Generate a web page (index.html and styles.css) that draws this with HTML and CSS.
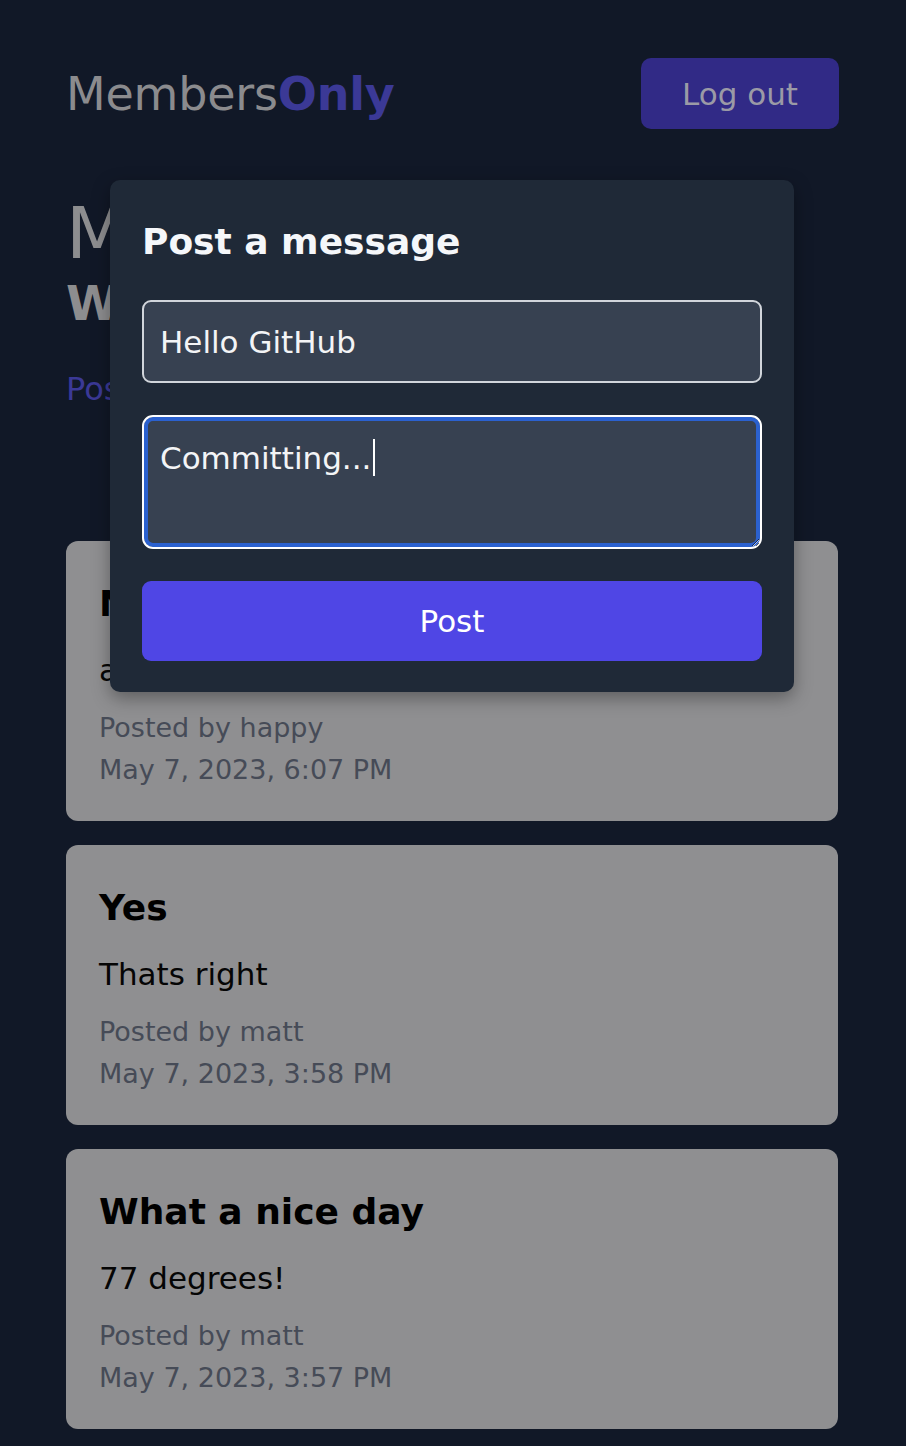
FILE: index.html
```html
<!DOCTYPE html>
<html lang="en">
<head>
<meta charset="utf-8">
<title>MembersOnly</title>
<link rel="stylesheet" href="styles.css">
</head>
<body>
<div class="page">
  <header class="header">
    <div class="logo">Members<span class="logo-accent">Only</span></div>
    <button class="logout">Log out</button>
  </header>

  <section class="intro">
    <h1 class="intro-title">Messages</h1>
    <h2 class="intro-sub">Welcome back, matt</h2>
    <a class="intro-link" href="#">Post a message</a>
  </section>

  <main class="messages">
    <article class="card">
      <h3 class="card-title">New member</h3>
      <p class="card-body">and happy to be here</p>
      <div class="card-meta">
        <div>Posted by happy</div>
        <div>May 7, 2023, 6:07 PM</div>
      </div>
    </article>
    <article class="card">
      <h3 class="card-title">Yes</h3>
      <p class="card-body">Thats right</p>
      <div class="card-meta">
        <div>Posted by matt</div>
        <div>May 7, 2023, 3:58 PM</div>
      </div>
    </article>
    <article class="card">
      <h3 class="card-title">What a nice day</h3>
      <p class="card-body">77 degrees!</p>
      <div class="card-meta">
        <div>Posted by matt</div>
        <div>May 7, 2023, 3:57 PM</div>
      </div>
    </article>
  </main>
</div>

<div class="modal">
  <h2 class="modal-title">Post a message</h2>
  <form class="modal-form">
    <input class="field" type="text" value="Hello GitHub">
    <div class="area-wrap">
      <textarea class="area">Committing...</textarea>
      <span class="caret"></span>
    </div>
    <button class="post" type="button">Post</button>
  </form>
</div>
</body>
</html>
```

FILE: styles.css
```css
* { box-sizing: border-box; }

html, body {
  margin: 0;
  padding: 0;
  background: #111827;
}

body {
  font-family: "DejaVu Sans", "Noto Sans", sans-serif;
  color: #000;
}

.page {
  padding: 58px 68px 40px 66px;
}

.header {
  display: flex;
  justify-content: space-between;
  align-items: center;
  height: 71px;
}

.logo {
  font-size: 46px;
  line-height: 56px;
  color: #8b8b8e;
  margin-left: 0;
  letter-spacing: -0.2px;
}

.logo-accent {
  color: #3b3996;
  font-weight: bold;
}

.logout {
  font-family: "DejaVu Sans", sans-serif;
  font-size: 31px;
  width: 198px;
  height: 71px;
  border: none;
  border-radius: 10px;
  background: #312a86;
  color: #9b9aa6;
  padding: 0;
  margin-right: -1px;
}

.intro {
  margin-top: 62px;
}

.intro-title {
  margin: 0;
  font-size: 72px;
  line-height: 84px;
  font-weight: normal;
  color: #8d8d8f;
}

.intro-sub {
  margin: 0;
  font-size: 48px;
  line-height: 56px;
  font-weight: bold;
  color: #8d8d8f;
}

.intro-link {
  display: block;
  margin-top: 38px;
  font-size: 32px;
  line-height: 40px;
  color: #3b3996;
  text-decoration: none;
}

.messages {
  margin-top: 132px;
  display: flex;
  flex-direction: column;
  gap: 24px;
}

.card {
  background: #8f8f91;
  border-radius: 12px;
  padding: 36px 32px 30px 33px;
  height: 280px;
}

.card-title {
  margin: 0;
  font-size: 36px;
  line-height: 54px;
  font-weight: bold;
  color: #000;
}

.card-body {
  margin: 16px 0 0;
  font-size: 31px;
  line-height: 46px;
  color: #050505;
}

.card-meta {
  margin-top: 14px;
  font-size: 27px;
  line-height: 42px;
  color: #464b57;
}

.modal {
  position: absolute;
  left: 110px;
  top: 180px;
  width: 684px;
  height: 512px;
  background: #1f2937;
  border-radius: 10px;
  padding: 35px 32px 32px 32px;
  box-shadow: 0 6px 18px rgba(0, 0, 0, 0.35);
}

.modal-title {
  margin: 0;
  font-size: 36px;
  line-height: 54px;
  font-weight: bold;
  color: #f5f7fa;
}

.modal-form {
  margin-top: 31px;
  display: flex;
  flex-direction: column;
  gap: 32px;
}

.field {
  display: block;
  width: 620px;
  height: 83px;
  border: 2px solid #d1d5db;
  border-radius: 9px;
  background: #374151;
  color: #f3f4f6;
  font-family: "DejaVu Sans", sans-serif;
  font-size: 31px;
  padding: 0 16px;
  outline: none;
}

.area-wrap {
  position: relative;
  width: 620px;
  height: 134px;
}

.area {
  display: block;
  width: 620px;
  height: 134px;
  border: 2px solid #ffffff;
  border-radius: 11px;
  box-shadow: inset 0 0 0 4px #2b61cf;
  background: #374151;
  color: #f3f4f6;
  font-family: "DejaVu Sans", sans-serif;
  font-size: 31px;
  line-height: 38px;
  padding: 22px 16px;
  outline: none;
  resize: vertical;
  margin: 0;
}

.caret {
  position: absolute;
  left: 231px;
  top: 24px;
  width: 2px;
  height: 37px;
  background: #ffffff;
}

.post {
  display: block;
  width: 620px;
  height: 80px;
  border: none;
  border-radius: 9px;
  background: #4f46e5;
  color: #ffffff;
  font-family: "DejaVu Sans", sans-serif;
  font-size: 31px;
  padding: 0;
}
```
